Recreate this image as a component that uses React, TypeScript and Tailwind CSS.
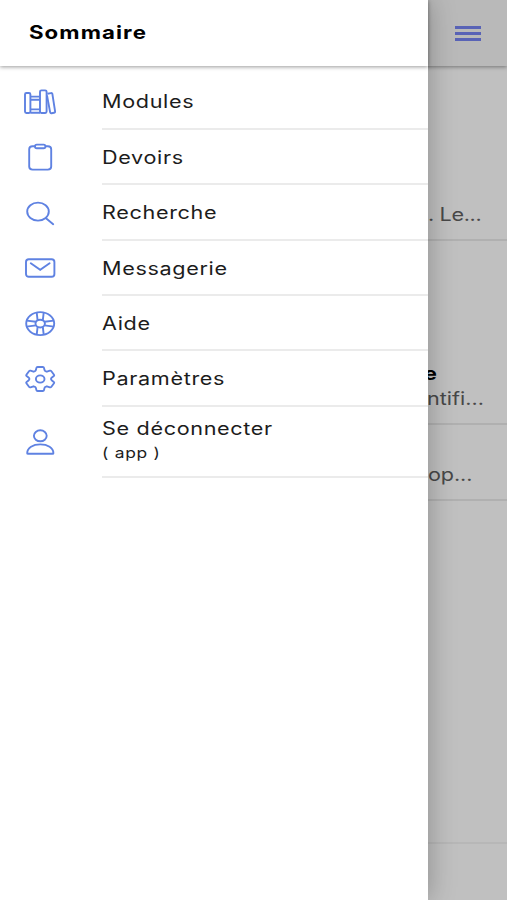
import type { ReactNode } from "react";

const icons: Record<string, ReactNode> = {
  modules: (
    <>
      <rect x="3" y="7" width="5.4" height="20" rx="1.4" />
      <path d="M8.4 10.6h9.6M8.4 13.8h9.6M8.4 23.4h9.6M8.4 26.8h9.6" />
      <rect x="18" y="4.4" width="6.6" height="22.6" rx="1.4" />
      <path d="M25.4 7.8l3.6-.7q1.200-.2 1.400 1l2.700 17.200q.2 1.300-1 1.500l-2.600.4q-1.200.2-1.400-1L25 9.400" />
    </>
  ),
  devoirs: (
    <>
      <path d="M13 5.200h-2.400q-3.400 0-3.400 3v17.400q0 3 3.400 3h15.200q3.400 0 3.400-3V8.200q0-3-3.400-3h-2.400" />
      <rect x="13" y="3.600" width="10.400" height="3.600" rx="1.800" />
    </>
  ),
  recherche: (
    <>
      <ellipse cx="16" cy="14.600" rx="10.800" ry="9" />
      <path d="M24 21.200l7.200 6" strokeLinecap="round" />
    </>
  ),
  messagerie: (
    <>
      <rect x="4" y="7.200" width="28.400" height="17.600" rx="2.800" />
      <path d="M8.800 11.300l9.400 6.500 9.400-6.500" strokeLinecap="round" />
    </>
  ),
  aide: (
    <>
      <ellipse cx="18.200" cy="15.600" rx="14" ry="11.500" />
      <ellipse cx="18.200" cy="15.600" rx="4.700" ry="3.900" />
      <path d="M15.600 12.300L14.700 4.500M20.800 12.300l.9-7.800M15.600 18.900l-.9 7.800M20.800 18.900l.9 7.800M14 13.800l-9.400-1.200M14 17.400l-9.400 1.200M22.400 13.800l9.400-1.200M22.400 17.400l9.400 1.200" />
    </>
  ),
  parametres: (
    <>
      <path
        d="M15.600 4h5.200q1 0 1.200.9l.5 2.200q.3 1 1.400 1.300l1 .3 3-1q.9-.3 1.500.5l2.600 3.500q.5.800-.2 1.400l-1.900 1.500q-.9.700-.9 1.400t.9 1.400l1.900 1.500q.7.600.2 1.400l-2.600 3.500q-.6.800-1.500.5l-3-1-1 .3q-1.100.3-1.400 1.300l-.5 2.200q-.2.900-1.200.9h-5.200q-1 0-1.200-.9l-.5-2.200q-.3-1-1.400-1.300l-1-.3-3 1q-.9.300-1.500-.5l-2.600-3.500q-.5-.8.200-1.400l1.900-1.500q.9-.7.900-1.400t-.9-1.400l-1.900-1.500q-.7-.6-.2-1.400l2.600-3.500q.6-.8 1.500-.5l3 1 1-.3q1.100-.3 1.400-1.300l.5-2.200q.2-.9 1.200-.9z"
        strokeLinejoin="round"
      />
      <ellipse cx="18.200" cy="16" rx="4.300" ry="3.600" />
    </>
  ),
  deconnecter: (
    <>
      <ellipse cx="18.300" cy="9.800" rx="6.400" ry="5.500" />
      <path d="M5.200 27.200c0-5.600 5.800-8.800 13.100-8.800s13.100 3.200 13.100 8.800q0 .6-1 .6H6.200q-1 0-1-.6z" />
    </>
  ),
};

const items = [
  { icon: "modules", label: "Modules" },
  { icon: "devoirs", label: "Devoirs" },
  { icon: "recherche", label: "Recherche" },
  { icon: "messagerie", label: "Messagerie" },
  { icon: "aide", label: "Aide" },
  { icon: "parametres", label: "Paramètres" },
  { icon: "deconnecter", label: "Se déconnecter", note: "( app )" },
];

// Text in the app is set wider than the font's natural proportions
function Wide({ children, className = "" }: { children: ReactNode; className?: string }) {
  return (
    <span className={`block w-max origin-left scale-x-[1.2] whitespace-nowrap ${className}`}>
      {children}
    </span>
  );
}

function MenuItem({ icon, label, note }: { icon: string; label: string; note?: string }) {
  return (
    <li className={`flex pl-[22px] ${note ? "h-[71px]" : "h-[55.4px]"}`}>
      <div className="flex w-20 shrink-0 items-center">
        <svg width="36" height="32" viewBox="0 0 36 32" fill="none" stroke="#5f82e2" strokeWidth="1.9">
          {icons[icon]}
        </svg>
      </div>
      <div
        className={`flex flex-1 flex-col justify-center border-b-2 border-[#ebebeb] ${note ? "pb-px" : "pt-[2.6px]"}`}
      >
        <Wide className="text-[18px] leading-6 tracking-[0.55px]">{label}</Wide>
        {note && <Wide className="text-[14.5px] leading-[23px] tracking-[0.6px]">{note}</Wide>}
      </div>
    </li>
  );
}

function Drawer() {
  return (
    <aside className="absolute inset-y-0 left-0 w-[428px] bg-white shadow-[0_0_26px_rgba(0,0,0,0.28)]">
      <header className="flex h-[66px] items-center pl-[29px] shadow-[0_1px_4px_rgba(0,0,0,0.4)]">
        <Wide className="text-[18.5px] font-bold tracking-[0.9px] text-black">Sommaire</Wide>
      </header>
      <ul className="pt-[8.4px]">
        {items.map((item) => (
          <MenuItem key={item.icon} {...item} />
        ))}
      </ul>
    </aside>
  );
}

export default function App() {
  return (
    <div className="relative h-[900px] w-[507px] overflow-hidden bg-[#c0c0c0] font-['Inter','Liberation_Sans',sans-serif] text-[#1c1c1c]">
      <div className="flex h-full flex-col">
        <header className="flex h-[66px] shrink-0 items-center justify-end bg-[#b9b9b9] pr-[26px] shadow-[0_1px_4px_rgba(0,0,0,0.4)]">
          <div className="flex flex-col gap-[3px]">
            <div className="h-[3px] w-[26px] bg-[#5963b6]" />
            <div className="h-[3px] w-[26px] bg-[#5963b6]" />
            <div className="h-[3px] w-[26px] bg-[#5963b6]" />
          </div>
        </header>
        <section className="flex h-[175px] shrink-0 flex-col justify-end border-b-2 border-[#b0b0b0] pb-[12px] pl-[428px] text-[18px] text-[#484848]">
          <Wide className="leading-6 tracking-[-0.3px]">. Le...</Wide>
        </section>
        <section className="flex h-[184px] shrink-0 flex-col justify-end border-b-2 border-[#b0b0b0] pb-[12px] text-[18px]">
          <Wide className="ml-[424px] leading-[26px] font-bold text-black">e</Wide>
          <Wide className="ml-[427px] leading-6 text-[#484848]">ntifi...</Wide>
        </section>
        <section className="flex h-[76px] shrink-0 flex-col justify-end border-b-2 border-[#b0b0b0] pb-[12px] pl-[428px] text-[18px] text-[#484848]">
          <Wide className="leading-6 tracking-[-0.1px]">op...</Wide>
        </section>
        <main className="flex-1" />
        <footer className="h-[58px] shrink-0 border-t-2 border-[#b7b7b7]" />
      </div>
      <Drawer />
    </div>
  );
}
